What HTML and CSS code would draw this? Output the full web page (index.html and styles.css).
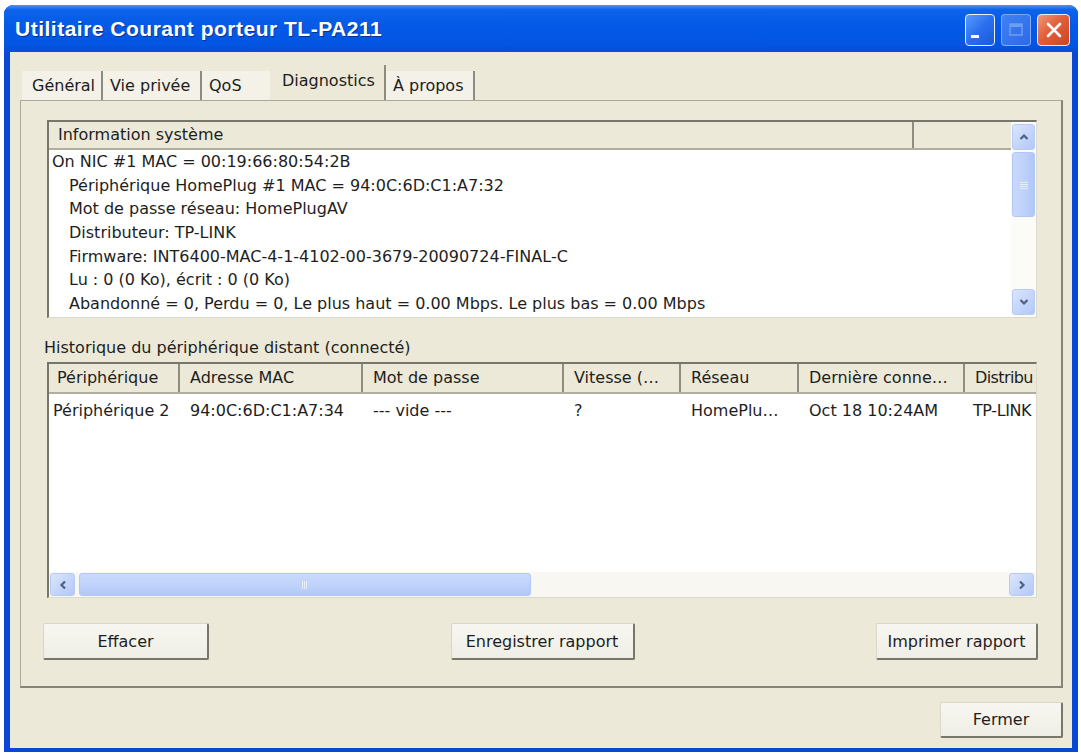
FILE: index.html
```html
<!DOCTYPE html>
<html lang="fr">
  <head>
    <meta charset="utf-8">
    <title>Utilitaire Courant porteur TL-PA211</title>
    <link rel="stylesheet" href="styles.css">
  </head>
  <body>
    <div class="window">
      <div class="titleBar">
        <span class="caption">Utilitaire Courant porteur TL-PA211</span>
        <div class="captionButtons">
          <span class="capBtn capMin">
            <svg width="16" height="16" viewBox="0 0 16 16"><rect x="2" y="10" width="8" height="3" fill="#fff"/></svg>
          </span>
          <span class="capBtn capMax">
            <svg width="18" height="18" viewBox="0 0 18 18"><rect x="3" y="3" width="12" height="11" fill="none" stroke="#6f9df0" stroke-width="1.5"/><rect x="3" y="3" width="12" height="3" fill="#6f9df0"/></svg>
          </span>
          <span class="capBtn capClose">
            <svg width="20" height="20" viewBox="0 0 20 20"><path d="M4 4 L16 16 M16 4 L4 16" stroke="#fff" stroke-width="2.6" stroke-linecap="round"/></svg>
          </span>
        </div>
      </div>

      <div class="client">
        <ul class="tabs">
          <li class="tabGeneral">Général</li>
          <li class="tabPrivacy">Vie privée</li>
          <li class="tabQos">QoS</li>
          <li class="tabDiag activeTab">Diagnostics</li>
          <li class="tabAbout">À propos</li>
        </ul>

        <div class="tabPanel">
          <div class="listBox infoBox">
            <div class="infoMain">
              <div class="listHead">
                <span class="headCell headInfo">Information système</span>
                <span class="headCell headFill"></span>
              </div>
              <div class="infoLines">
                <div class="infoLine">On NIC #1 MAC = 00:19:66:80:54:2B</div>
                <div class="infoLine sub">Périphérique HomePlug #1 MAC = 94:0C:6D:C1:A7:32</div>
                <div class="infoLine sub">Mot de passe réseau: HomePlugAV</div>
                <div class="infoLine sub">Distributeur: TP-LINK</div>
                <div class="infoLine sub">Firmware: INT6400-MAC-4-1-4102-00-3679-20090724-FINAL-C</div>
                <div class="infoLine sub">Lu : 0 (0 Ko), écrit : 0 (0 Ko)</div>
                <div class="infoLine sub">Abandonné = 0, Perdu = 0, Le plus haut = 0.00 Mbps. Le plus bas = 0.00 Mbps</div>
              </div>
            </div>
            <div class="vScroll">
              <span class="scrollBtn vBtn">
                <svg width="12" height="12" viewBox="0 0 12 12"><path d="M2.5 8 L6 4.5 L9.5 8" fill="none" stroke="#4d6185" stroke-width="2.2"/></svg>
              </span>
              <span class="vThumb">
                <svg width="10" height="10" viewBox="0 0 10 10"><path d="M1 2.5 H9 M1 4.5 H9 M1 6.5 H9 M1 8.5 H9" stroke="#e6eefc" stroke-width="1"/></svg>
              </span>
              <span class="vTrack"></span>
              <span class="scrollBtn vBtn">
                <svg width="12" height="12" viewBox="0 0 12 12"><path d="M2.5 4 L6 7.5 L9.5 4" fill="none" stroke="#4d6185" stroke-width="2.2"/></svg>
              </span>
            </div>
          </div>

          <div class="groupLabel">Historique du périphérique distant (connecté)</div>

          <div class="listBox historyBox">
            <div class="historyTable">
              <div class="gridRow gridHead">
                <span class="headCell">Périphérique</span>
                <span class="headCell">Adresse MAC</span>
                <span class="headCell">Mot de passe</span>
                <span class="headCell">Vitesse (…</span>
                <span class="headCell">Réseau</span>
                <span class="headCell">Dernière conne…</span>
                <span class="headCell headLast">Distribu</span>
              </div>
              <div class="gridRow gridData">
                <span class="cell">Périphérique 2</span>
                <span class="cell">94:0C:6D:C1:A7:34</span>
                <span class="cell">--- vide ---</span>
                <span class="cell">?</span>
                <span class="cell">HomePlu…</span>
                <span class="cell">Oct 18 10:24AM</span>
                <span class="cell cellLast">TP-LINK</span>
              </div>
            </div>
            <div class="hScroll">
              <span class="scrollBtn hBtn">
                <svg width="12" height="12" viewBox="0 0 12 12"><path d="M8 2.5 L4.5 6 L8 9.5" fill="none" stroke="#4d6185" stroke-width="2.2"/></svg>
              </span>
              <span class="hThumb">
                <svg width="10" height="10" viewBox="0 0 10 10"><path d="M2.5 1 V9 M4.5 1 V9 M6.5 1 V9" stroke="#e6eefc" stroke-width="1"/></svg>
              </span>
              <span class="hTrack"></span>
              <span class="scrollBtn hBtn">
                <svg width="12" height="12" viewBox="0 0 12 12"><path d="M4 2.5 L7.5 6 L4 9.5" fill="none" stroke="#4d6185" stroke-width="2.2"/></svg>
              </span>
            </div>
          </div>

          <div class="actions">
            <button class="btn btnClear">Effacer</button>
            <button class="btn btnSave">Enregistrer rapport</button>
            <button class="btn btnPrint">Imprimer rapport</button>
          </div>
        </div>

        <div class="footer">
          <button class="btn btnClose">Fermer</button>
        </div>
      </div>
    </div>
  </body>
</html>
```

FILE: styles.css
```css
* {
  box-sizing: border-box;
}

body {
  margin: 0;
  background: #fff;
  font-family: "DejaVu Sans", Verdana, sans-serif;
  font-size: 16px;
  color: #1e1e1e;
}

/* window frame */

.window {
  display: flex;
  flex-direction: column;
  width: 1074px;
  height: 747px;
  margin: 5px 0 0 4px;
  background: #0a47d4;
  border-radius: 9px 9px 0 0;
}

.titleBar {
  display: flex;
  align-items: center;
  justify-content: space-between;
  height: 47px;
  padding: 0 8px 0 11px;
  border-radius: 9px 9px 0 0;
  background: linear-gradient(#4a95fb 0, #0d63ea 10%, #0459e6 45%, #0256e3 85%, #0b4ccf 100%);
}

.caption {
  color: #fff;
  font-family: "Liberation Sans", Arial, sans-serif;
  font-weight: bold;
  font-size: 21px;
  letter-spacing: 0.5px;
  text-shadow: 1px 1px 0 #0c2f96;
}

.captionButtons {
  display: flex;
  gap: 6px;
  margin-top: 2px;
}

.capBtn {
  display: flex;
  align-items: center;
  justify-content: center;
  width: 30px;
  height: 32px;
  border: 1.5px solid #e8f0ff;
  border-radius: 4px;
  background: linear-gradient(135deg, #5a9cfb 0, #2a6ff0 50%, #1a58dc 100%);
}

.capMin svg {
  margin: 6px 6px 0 0;
}

.capMax {
  border-color: rgba(220, 232, 255, 0.45);
  background: linear-gradient(135deg, #3f82f4 0, #2b6ae8 100%);
}

.capClose {
  width: 33px;
  background: linear-gradient(135deg, #f0977a 0, #e0603b 45%, #cd4420 100%);
}

.client {
  display: flex;
  flex-direction: column;
  flex: 1;
  margin: 0 6px 4px 6px;
  padding: 13px 9px 0 10px;
  background: #ece9d8;
}

/* tabs */

ul.tabs {
  display: flex;
  align-items: flex-end;
  height: 35px;
  margin: 0 0 0 2px;
  padding: 0;
  list-style: none;
}

ul.tabs > li {
  height: 29px;
  padding-left: 7px;
  line-height: 29px;
  background: #f3f1e8;
  border-right: 2px solid #8e8c81;
  white-space: nowrap;
}

ul.tabs > li.activeTab {
  height: 35px;
  line-height: 32px;
  padding-left: 12px;
  background: #ece9d8;
}

.tabGeneral {
  width: 81px;
  padding-left: 10px !important;
}

.tabPrivacy {
  width: 99px;
}

.tabQos {
  width: 68px;
  border-right: none !important;
}

.tabDiag {
  width: 116px;
}

.tabAbout {
  width: 89px;
}

.tabPanel {
  height: 588px;
  padding: 19px 24px 0 26px;
  background: #ece9d8;
  border: 1px solid #aaa89b;
  border-right: 2px solid #85847a;
  border-bottom: 2px solid #85847a;
}

/* list boxes */

.listBox {
  display: flex;
  background: #fff;
  border-top: 2px solid #77766b;
  border-left: 2px solid #77766b;
  border-right: 1px solid #dcdacd;
  border-bottom: 1px solid #dcdacd;
}

.infoBox {
  height: 198px;
}

.infoMain {
  display: flex;
  flex-direction: column;
  flex: 1;
  overflow: hidden;
}

.listHead {
  display: flex;
  height: 28px;
  background: #ece9d8;
  border-bottom: 2px solid #b0ae9f;
}

.headCell {
  padding-left: 9px;
  line-height: 26px;
  background: #ece9d8;
  border-right: 2px solid #8e8d82;
  white-space: nowrap;
  overflow: hidden;
}

.headInfo {
  width: 865px;
}

.headFill {
  flex: 1;
  border-right: none;
}

.infoLines {
  padding-left: 3px;
}

.infoLine {
  height: 23.7px;
  line-height: 23.7px;
  white-space: nowrap;
}

.infoLine.sub {
  padding-left: 17px;
}

.vScroll {
  display: flex;
  flex-direction: column;
  width: 25px;
  padding: 2px 1px 2px 1px;
  background: #fbfbf8;
}

.scrollBtn {
  display: flex;
  align-items: center;
  justify-content: center;
  border: 1px solid #b7cbf5;
  border-radius: 3px;
  background: linear-gradient(135deg, #dbe6fd 0, #c4d5fa 55%, #b3c8f6 100%);
}

.vBtn {
  height: 26px;
}

.vThumb {
  display: flex;
  align-items: center;
  justify-content: center;
  height: 65px;
  margin-top: 2px;
  border: 1px solid #b3c7f4;
  border-radius: 3px;
  background: linear-gradient(90deg, #c9d9fc 0, #bcd0fa 60%, #b0c6f6 100%);
}

.vTrack {
  flex: 1;
}

.historyBox {
  flex-direction: column;
  height: 236px;
  margin-top: 4px;
}

.historyTable {
  flex: 1;
  overflow: hidden;
}

.gridRow {
  display: grid;
  grid-template-columns: 131px 183px 201px 117px 118px 166px 140px;
  width: 1056px;
}

.gridHead {
  height: 30px;
  border-bottom: 2px solid #b0ae9f;
}

.gridHead .headCell {
  line-height: 28px;
  padding-left: 8px;
}

.gridHead .headCell:nth-child(n+2) {
  padding-left: 10px;
}

.gridHead .headLast {
  padding-left: 8px;
  letter-spacing: -0.6px;
}

.gridData {
  height: 24px;
  margin-top: 5px;
  line-height: 24px;
}

.cell {
  padding-left: 10px;
  white-space: nowrap;
  overflow: hidden;
}

.cell:first-child {
  padding-left: 4px;
}

.cellLast {
  padding-left: 8px;
  letter-spacing: -0.4px;
}

.hScroll {
  display: flex;
  height: 25px;
  padding: 1px 2px 1px 1px;
  background: #f8f7f2;
}

.hBtn {
  width: 25px;
}

.hThumb {
  display: flex;
  align-items: center;
  justify-content: center;
  width: 452px;
  margin-left: 4px;
  border: 1px solid #b3c7f4;
  border-radius: 3px;
  background: linear-gradient(#cadafc 0, #bdd1fa 60%, #b2c7f6 100%);
}

.hTrack {
  flex: 1;
}

.groupLabel {
  height: 20px;
  margin-top: 20px;
  margin-left: -3px;
  line-height: 20px;
}

/* buttons */

.actions {
  display: flex;
  justify-content: space-between;
  margin: 25px -1px 0 -4px;
}

.btn {
  height: 37px;
  padding: 0;
  font-family: inherit;
  font-size: 16px;
  color: #1e1e1e;
  background: linear-gradient(#f7f6f0 0, #efeee6 100%);
  border: 1px solid #d9d7ca;
  border-right: 2px solid #77766b;
  border-bottom: 2px solid #77766b;
  border-radius: 2px;
}

.btnClear {
  width: 166px;
}

.btnSave {
  width: 184px;
}

.btnPrint {
  width: 162px;
}

.footer {
  display: flex;
  justify-content: flex-end;
  margin-top: 14px;
}

.btnClose {
  width: 123px;
  height: 36px;
}
```
